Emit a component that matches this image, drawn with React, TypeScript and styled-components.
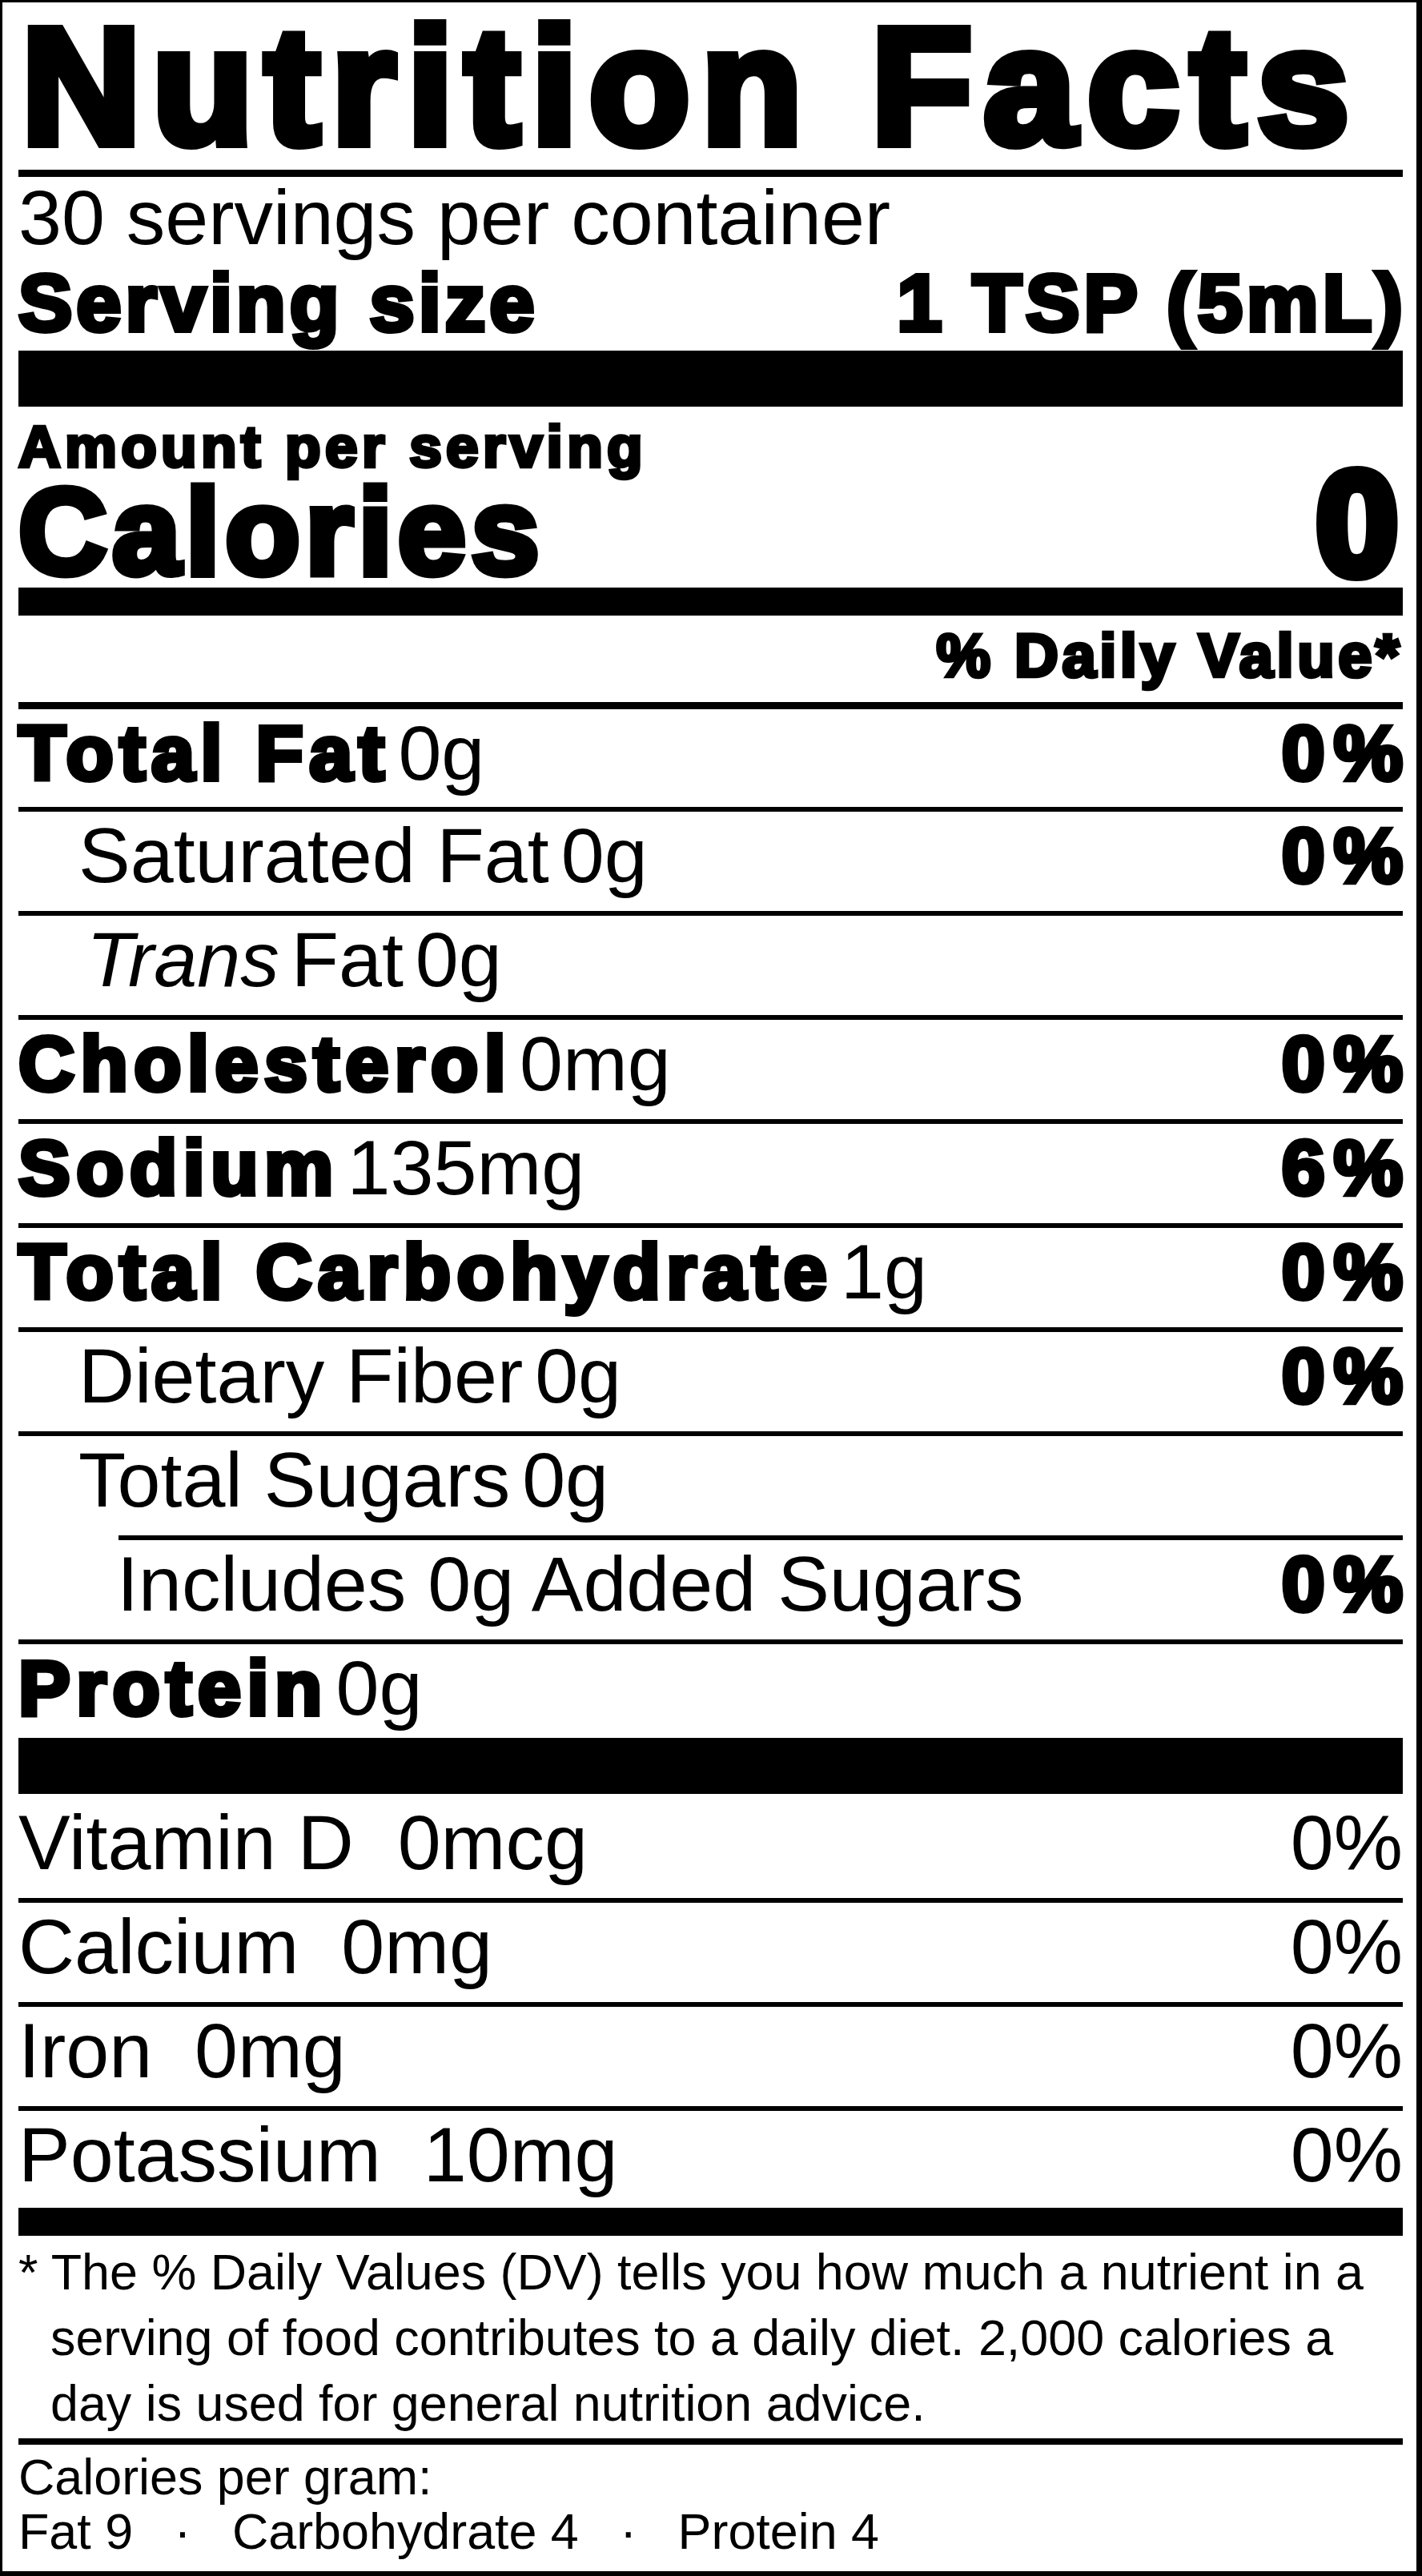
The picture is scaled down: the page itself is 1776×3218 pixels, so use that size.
import React from "react";
import styled, { createGlobalStyle, css } from "styled-components";

const GlobalStyle = createGlobalStyle`
  html, body {
    margin: 0;
    padding: 0;
    background: #ffffff;
  }
`;

// Liberation Sans Bold is lighter than the label's black weight,
// so heavy text gets a stroke and some extra tracking.
const heavy = (stroke: number, spacing: number) => css`
  font-weight: 700;
  -webkit-text-stroke: ${stroke}px #000;
  letter-spacing: ${spacing}px;
`;

const Panel = styled.section`
  box-sizing: border-box;
  width: 1776px;
  border-style: solid;
  border-color: #000;
  border-width: 3px 7px 7px 3px;
  padding: 0 17px 16px 20px;
  background: #ffffff;
  color: #000;
  font-family: "Liberation Sans", Arial, Helvetica, sans-serif;
`;

const Title = styled.h1`
  margin: 0;
  padding: 1px 0 0 4px;
  font-size: 206px;
  line-height: 208px;
  white-space: nowrap;
  ${heavy(12, 14.6)}
`;

const Rule = styled.div<{ $h: number; $mt?: number }>`
  height: ${(p) => p.$h}px;
  margin-top: ${(p) => p.$mt ?? 0}px;
  background: #000;
`;

const Servings = styled.div`
  font-size: 97px;
  line-height: 101px;
  white-space: nowrap;
`;

const ServingRow = styled.div`
  display: flex;
  justify-content: space-between;
  align-items: baseline;
  margin-bottom: 4px;
  font-size: 101px;
  line-height: 112px;
  white-space: nowrap;
  ${heavy(6, 5)}
`;

const ServingValue = styled.span`
  margin-right: -5px;
`;

const AmountPer = styled.div`
  font-size: 73px;
  line-height: 99px;
  white-space: nowrap;
  ${heavy(4.4, 5.3)}
`;

const CaloriesRow = styled.div`
  display: flex;
  justify-content: space-between;
  align-items: baseline;
`;

const CaloriesWord = styled.span`
  font-size: 153px;
  line-height: 114px;
  ${heavy(9, 6.7)}
`;

const CaloriesValue = styled.span`
  margin-right: 6px;
  font-size: 184px;
  line-height: 92px;
  ${heavy(14, 0)}
`;

const DvHeader = styled.div`
  padding-bottom: 8px;
  text-align: right;
  font-size: 76px;
  line-height: 100px;
  ${heavy(4.6, 4.5)}
`;

const NutrientRow = styled.div<{
  $indent?: number;
  $pt?: number;
  $pb?: number;
  $open?: boolean;
}>`
  display: flex;
  justify-content: space-between;
  align-items: baseline;
  padding: ${(p) => p.$pt ?? 0}px 0 ${(p) => p.$pb ?? 14}px
    ${(p) => p.$indent ?? 0}px;
  border-bottom: ${(p) => (p.$open ? "none" : "6px solid #000")};
  font-size: 97px;
  line-height: 110px;
  white-space: nowrap;
`;

const Name = styled.span`
  ${heavy(6, 7.5)}
`;

// the space between a name and its amount is set tighter than a normal one
const Sep = styled.span<{ $tighten: number }>`
  letter-spacing: ${(p) => -p.$tighten}px;
`;

const Gap = styled.span<{ $w: number }>`
  display: inline-block;
  width: ${(p) => p.$w}px;
`;

const Percent = styled.span<{ $bold?: boolean }>`
  ${(p) =>
    p.$bold &&
    css`
      margin-right: -11px;
      ${heavy(6, 11)}
    `}
`;

const SubRule = styled.div`
  height: 6px;
  margin-left: 125px;
  background: #000;
`;

const Footnote = styled.p`
  margin: 0;
  padding: 4px 0 3px 40px;
  text-indent: -40px;
  font-size: 62.8px;
  line-height: 82px;
`;

const Footer = styled.div`
  padding-top: 6px;
  font-size: 62.8px;
  line-height: 68px;
  white-space: nowrap;
`;

const Dot = styled.span`
  margin: 0 34px;
`;

const App: React.FC = () => {
  return (
    <>
      <GlobalStyle />
      <Panel>
        <Title>Nutrition Facts</Title>
        <Rule $h={9} />
        <Servings>30 servings per container</Servings>
        <ServingRow>
          <span>Serving size</span>
          <ServingValue>1 TSP (5mL)</ServingValue>
        </ServingRow>
        <Rule $h={70} />

        <AmountPer>Amount per serving</AmountPer>
        <CaloriesRow>
          <CaloriesWord>Calories</CaloriesWord>
          <CaloriesValue>0</CaloriesValue>
        </CaloriesRow>
        <Rule $h={35} $mt={13} />

        <DvHeader>% Daily Value*</DvHeader>
        <Rule $h={9} />

        <NutrientRow $pb={12}>
          <span>
            <Name>Total Fat</Name>
            <Sep $tighten={17}> </Sep>0g
          </span>
          <Percent $bold>0%</Percent>
        </NutrientRow>
        <NutrientRow $indent={75}>
          <span>
            Saturated Fat<Sep $tighten={12}> </Sep>0g
          </span>
          <Percent $bold>0%</Percent>
        </NutrientRow>
        <NutrientRow $indent={85}>
          <span>
            <i>Trans</i>
            <Sep $tighten={12}> </Sep>Fat<Sep $tighten={12}> </Sep>0g
          </span>
        </NutrientRow>
        <NutrientRow>
          <span>
            <Name>Cholesterol</Name>
            <Sep $tighten={17}> </Sep>0mg
          </span>
          <Percent $bold>0%</Percent>
        </NutrientRow>
        <NutrientRow>
          <span>
            <Name>Sodium</Name>
            <Sep $tighten={17}> </Sep>135mg
          </span>
          <Percent $bold>6%</Percent>
        </NutrientRow>
        <NutrientRow>
          <span>
            <Name>Total Carbohydrate</Name>
            <Sep $tighten={17}> </Sep>1g
          </span>
          <Percent $bold>0%</Percent>
        </NutrientRow>
        <NutrientRow $indent={75}>
          <span>
            Dietary Fiber<Sep $tighten={12}> </Sep>0g
          </span>
          <Percent $bold>0%</Percent>
        </NutrientRow>
        <NutrientRow $indent={75} $open>
          <span>
            Total Sugars<Sep $tighten={12}> </Sep>0g
          </span>
        </NutrientRow>
        <SubRule />
        <NutrientRow $indent={123}>
          <span>Includes 0g Added Sugars</span>
          <Percent $bold>0%</Percent>
        </NutrientRow>
        <NutrientRow $pb={7} $open>
          <span>
            <Name>Protein</Name>
            <Sep $tighten={17}> </Sep>0g
          </span>
        </NutrientRow>
        <Rule $h={70} />

        <NutrientRow $pt={6}>
          <span>
            Vitamin D <Gap $w={28} />
            0mcg
          </span>
          <span>0%</span>
        </NutrientRow>
        <NutrientRow>
          <span>
            Calcium <Gap $w={26} />
            0mg
          </span>
          <span>0%</span>
        </NutrientRow>
        <NutrientRow>
          <span>
            Iron <Gap $w={26} />
            0mg
          </span>
          <span>0%</span>
        </NutrientRow>
        <NutrientRow $pb={11} $open>
          <span>
            Potassium <Gap $w={26} />
            10mg
          </span>
          <span>0%</span>
        </NutrientRow>
        <Rule $h={35} />

        <Footnote>
          * The % Daily Values (DV) tells you how much a nutrient in a serving
          of food contributes to a daily diet. 2,000 calories a day is used for
          general nutrition advice.
        </Footnote>
        <Rule $h={8} />

        <Footer>
          <div>Calories per gram:</div>
          <div>
            Fat 9 <Dot>·</Dot> Carbohydrate 4 <Dot>·</Dot> Protein 4
          </div>
        </Footer>
      </Panel>
    </>
  );
};

export default App;
